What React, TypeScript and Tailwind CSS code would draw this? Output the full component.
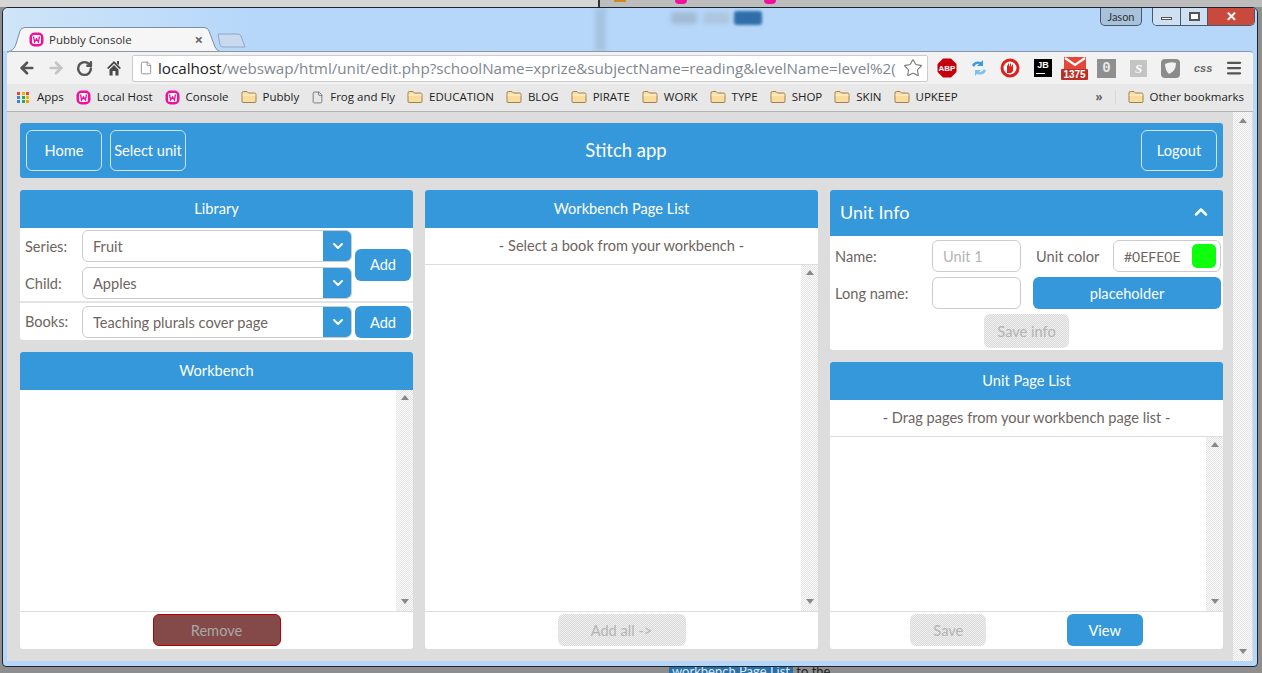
import { ArrowLeft, ArrowRight, ChevronDown, ChevronUp, File, Menu, RotateCw, Star } from "lucide-react"
import type { ReactNode } from "react"

const trackDither = "bg-[repeating-conic-gradient(#e4e4e4_0%_25%,#fbfbfb_0%_50%)] bg-size-[2px_2px]"
const buttonDither = "bg-[repeating-conic-gradient(#dadada_0%_25%,#efefef_0%_50%)] bg-size-[2px_2px]"

const bookmarks = [
  { kind: "wamp", label: "Local Host" },
  { kind: "wamp", label: "Console" },
  { kind: "folder", label: "Pubbly" },
  { kind: "doc", label: "Frog and Fly" },
  { kind: "folder", label: "EDUCATION" },
  { kind: "folder", label: "BLOG" },
  { kind: "folder", label: "PIRATE" },
  { kind: "folder", label: "WORK" },
  { kind: "folder", label: "TYPE" },
  { kind: "folder", label: "SHOP" },
  { kind: "folder", label: "SKIN" },
  { kind: "folder", label: "UPKEEP" },
]

function WampIcon() {
  return (
    <svg width="15" height="15" viewBox="0 0 15 15" className="shrink-0">
      <rect x="0.5" y="0.5" width="14" height="14" rx="5" fill="#f0109c" />
      <rect x="3" y="3" width="9" height="9" rx="2" fill="#fff" />
      <path d="M4.5 4.5 L5.6 10 L7.5 6.8 L9.4 10 L10.5 4.5" fill="none" stroke="#f0109c" strokeWidth="1.3" />
    </svg>
  )
}

function FolderIcon() {
  return (
    <svg width="16" height="14" viewBox="0 0 16 14" className="shrink-0">
      <path d="M1 3 Q1 1.5 2.5 1.5 H6 L7.5 3 H13.5 Q15 3 15 4.5 V11.5 Q15 12.5 14 12.5 H2 Q1 12.5 1 11.5 Z" fill="#fbdc9f" stroke="#9c8351" />
      <path d="M1.5 5 H14.5" stroke="#fff3d6" />
    </svg>
  )
}

function AppsIcon() {
  const colors = ["#e8453c", "#f4b400", "#e8453c", "#3f7fe8", "#2fa84f", "#f4b400", "#3f7fe8", "#2fa84f", "#f49a00"]
  return (
    <div className="grid grid-cols-3 gap-px w-[13px] shrink-0">
      {colors.map((c, i) => (
        <svg key={i} width="3" height="3" viewBox="0 0 3 3">
          <rect width="3" height="3" fill={c} />
        </svg>
      ))}
    </div>
  )
}

function HomeIcon() {
  return (
    <svg width="14" height="16" viewBox="0 0 14 16" className="ml-[14px] shrink-0">
      <path d="M7 1 L14 8 L12.5 9 L7 3.6 L1.5 9 L0 8 Z" fill="#444" />
      <path d="M10 1 H12 V5 L10 3.5 Z" fill="#444" />
      <path d="M2.5 9.5 L7 5 L11.5 9.5 V15.5 H8.4 V11 H5.6 V15.5 H2.5 Z" fill="#4a4a4a" />
    </svg>
  )
}

function Bookmark({ kind, label }: { kind: string; label: string }) {
  return (
    <div className="flex items-center gap-[6px] shrink-0">
      {kind === "wamp" && <WampIcon />}
      {kind === "folder" && <FolderIcon />}
      {kind === "doc" && <File className="h-[15px] w-[13px] text-[#666] shrink-0" strokeWidth={1.5} />}
      <span>{label}</span>
    </div>
  )
}

function Extensions() {
  return (
    <div className="flex items-center ml-[9px] h-full">
      <svg width="20" height="20" viewBox="0 0 20 20" className="shrink-0">
        <path d="M6 0.5 H14 L19.5 6 V14 L14 19.5 H6 L0.5 14 V6 Z" fill="#c4000d" />
        <text x="10" y="13" textAnchor="middle" fontSize="8" fontWeight="700" fill="#fff" fontFamily="Liberation Sans">ABP</text>
      </svg>
      <svg width="20" height="20" viewBox="0 0 20 20" className="ml-[12px] shrink-0">
        <path d="M3 7 Q6 2 12 4 L14 2 V8 H8 L10 6 Q7 5 5 9 Z" fill="#3a9ae0" />
        <path d="M17 13 Q14 18 8 16 L6 18 V12 H12 L10 14 Q13 15 15 11 Z" fill="#7cc2f0" />
      </svg>
      <svg width="20" height="20" viewBox="0 0 20 20" className="ml-[11px] shrink-0">
        <circle cx="10" cy="10" r="8" fill="#fff" stroke="#e0201a" strokeWidth="3" />
        <path d="M7 15 V8 L9 5 V9 L11 4.5 V9 L13 6 V13 L11 15 Z" fill="#e0201a" />
      </svg>
      <div className="ml-[14px] w-[18px] h-[18px] bg-black text-white text-[9px] leading-none font-bold font-['Liberation_Sans'] flex flex-col items-center pt-[2px] shrink-0">
        <span>JB</span>
        <span className="block w-[9px] h-px bg-white mt-[3px] self-start ml-[2px]" />
      </div>
      <div className="ml-[9px] relative w-[27px] h-[24px] shrink-0 flex flex-col items-center">
        <svg width="22" height="14" viewBox="0 0 22 14" className="mt-px">
          <rect width="22" height="14" fill="#e2473a" />
          <path d="M1 1 L11 8 L21 1" fill="none" stroke="#fff" strokeWidth="2.2" />
        </svg>
        <span className="absolute bottom-0 w-[27px] h-[11px] bg-[#bd2f24] text-white text-[10px] leading-[11px] font-bold text-center font-['Liberation_Sans'] rounded-[1px]">1375</span>
      </div>
      <div className="ml-[9px] w-[19px] h-[19px] bg-[#8f8f8f] text-[#e8e8e8] text-[14px] leading-[19px] font-bold text-center font-['Liberation_Mono'] shrink-0">0</div>
      <div className="ml-[14px] w-[17px] h-[17px] bg-[#c4c4c4] text-white text-[13px] leading-[17px] italic font-bold text-center font-['Liberation_Serif'] shrink-0">S</div>
      <svg width="19" height="19" viewBox="0 0 19 19" className="ml-[14px] shrink-0">
        <rect width="19" height="19" rx="4" fill="#8c8c8c" />
        <path d="M4 5 Q10 2 15 4 Q15 12 8 15 Q4 11 4 5 Z" fill="#f2f2f2" />
      </svg>
      <span className="ml-[14px] text-[11px] font-bold italic text-[#666] font-['Liberation_Sans'] w-[18px] shrink-0">css</span>
      <Menu className="ml-[13px] h-[18px] w-[18px] text-[#555] shrink-0" strokeWidth={3} />
    </div>
  )
}

function PanelHeader({ children }: { children: ReactNode }) {
  return (
    <div className="h-[38px] shrink-0 bg-[#3498db] text-white flex items-center justify-center rounded-t-[3px]">
      {children}
    </div>
  )
}

function Select({ value }: { value: string }) {
  return (
    <div className="w-[270px] h-[32px] flex rounded-[6px] border border-[#ccc] overflow-hidden bg-white">
      <span className="flex-1 pl-[10px] leading-[31px]">{value}</span>
      <span className="w-[29px] -my-px -mr-px bg-[#3498db] flex items-center justify-center">
        <ChevronDown className="h-[16px] w-[16px] text-white" strokeWidth={3} />
      </span>
    </div>
  )
}

function BlueButton({ className, children }: { className: string; children: ReactNode }) {
  return (
    <button className={`h-[32px] pt-px rounded-[6px] bg-[#3498db] text-white ${className}`}>{children}</button>
  )
}

function DisabledButton({ className, children }: { className: string; children: ReactNode }) {
  return (
    <button className={`pt-px rounded-[6px] text-[#b4b4b4] ${buttonDither} ${className}`}>{children}</button>
  )
}

function ScrollList() {
  return (
    <div className="flex-1 flex justify-end min-h-0">
      <div className={`w-[17px] flex flex-col items-center justify-between pt-[5px] pb-[7px] ${trackDither}`}>
        <span className="w-0 h-0 border-x-[4px] border-x-transparent border-b-[5px] border-b-[#888]" />
        <span className="w-0 h-0 border-x-[4px] border-x-transparent border-t-[5px] border-t-[#888]" />
      </div>
    </div>
  )
}

function Footer({ children }: { children: ReactNode }) {
  return (
    <div className="h-[38px] shrink-0 border-t border-[#ddd] flex items-start justify-center pt-[2px]">{children}</div>
  )
}

export default function App() {
  return (
    <div className="w-[1262px] h-[673px] overflow-hidden flex flex-col bg-[#8e8e8e] font-['Lato',sans-serif] text-[14.6px] text-[#6e6560]">
      {/* the window behind, top edge */}
      <div className="h-[7px] shrink-0 bg-[#d6d6d6] relative overflow-hidden">
        <div className="absolute left-[598px] top-0 bottom-0 right-0 bg-[#bdbdbd] border-l-2 border-[#333]" />
        <div className="absolute left-[675px] -top-[4px] w-[12px] h-[8px] rounded-full bg-[#f0109c]" />
        <div className="absolute left-[764px] -top-[4px] w-[12px] h-[8px] rounded-full bg-[#f0109c]" />
        <div className="absolute left-[614px] top-0 w-[12px] h-[2px] bg-[#d08a20]" />
      </div>

      {/* window */}
      <div className="h-[660px] shrink-0 mx-[2px] w-[1256px] border border-[#1c2530] rounded-t-[6px] rounded-b-[4px] bg-[#b6d7fa] flex flex-col px-[4px] pb-[5px] overflow-hidden">
        {/* title area */}
        <div className="h-[43px] shrink-0 relative bg-linear-to-r from-[#cfe5f8] to-[#b6d7fa] to-[20%] -mx-[4px] px-[4px]">
          <div className="absolute left-[592px] top-0 w-[11px] h-[43px] bg-[#a5c3e2] blur-[2px]" />
          <div className="absolute left-[668px] top-[4px] w-[26px] h-[12px] rounded-[3px] bg-[#a3bbd5] blur-[2px]" />
          <div className="absolute left-[700px] top-[4px] w-[27px] h-[12px] rounded-[3px] bg-[#aec6df] blur-[2px]" />
          <div className="absolute left-[731px] top-[3px] w-[28px] h-[14px] rounded-[3px] bg-[#2f6ea8] blur-[1.5px]" />
          <div className="absolute left-[1097px] top-0 w-[42px] h-[18px] rounded-b-[5px] border border-t-0 border-[#46586c] bg-[#a9c2db] text-[11px] leading-[17px] text-center text-[#333]">
            Jason
          </div>
          <div className="absolute left-[1149px] top-0 w-[103px] h-[18px] rounded-b-[5px] border border-t-0 border-[#46586c] flex overflow-hidden">
            <span className="w-[28px] border-r border-[#46586c] bg-[#cfe0f2] flex items-center justify-center">
              <span className="block w-[11px] h-[3px] mt-[4px] bg-white border border-[#555]" />
            </span>
            <span className="w-[27px] border-r border-[#46586c] bg-[#cfe0f2] flex items-center justify-center">
              <span className="block w-[11px] h-[9px] bg-white border-2 border-[#555]" />
            </span>
            <span className="flex-1 bg-[#c9493c] text-white text-[13px] leading-[17px] font-bold text-center">✕</span>
          </div>
          {/* tab */}
          <div className="absolute left-[4px] top-[19px] w-[214px] h-[25px]">
            <svg width="214" height="25" viewBox="0 0 214 25" className="absolute inset-0">
              <path d="M0 25 Q7 24 9 17 L13 4 Q14 0.5 18 0.5 H197 Q201 0.5 202 4 L208 20 Q210 24 214 25 Z" fill="#f6f6f6" stroke="#7d8ea3" />
            </svg>
            <div className="relative flex items-center h-full pl-[22px] pr-[18px] font-['Open_Sans',sans-serif] text-[11.5px] text-[#333]">
              <WampIcon />
              <span className="ml-[5px] flex-1">Pubbly Console</span>
              <span className="text-[15px] font-bold text-[#666] leading-none">×</span>
            </div>
          </div>
          <div className="absolute left-[213px] top-[25px] w-[30px] h-[15px]">
            <svg width="30" height="15" viewBox="0 0 30 15">
              <path d="M2 1 H22 Q24 1 25 3 L29 14 H7 Q5 14 4 12 Z" fill="#c9d9ee" stroke="#8fa6c4" />
            </svg>
          </div>
        </div>

        {/* toolbar */}
        <div className="h-[33px] shrink-0 bg-[#f2f2f2] border-t border-[#8a97a8] rounded-t-[3px] flex items-center pl-[11px] relative">
          <ArrowLeft className="h-[18px] w-[18px] text-[#555]" strokeWidth={3.5} />
          <ArrowRight className="h-[18px] w-[18px] text-[#c4c4c4] ml-[11px]" strokeWidth={3.5} />
          <RotateCw className="h-[17px] w-[17px] text-[#555] ml-[11px]" strokeWidth={3.5} />
          <HomeIcon />
          <div className="ml-[11px] w-[796px] h-[27px] bg-white border border-[#ccc] rounded-[2px] flex items-center pl-[6px] pr-[4px]">
            <File className="h-[16px] w-[14px] text-[#888] shrink-0" strokeWidth={1.5} />
            <div className="ml-[5px] flex-1 overflow-hidden whitespace-nowrap font-['Open_Sans',sans-serif] text-[15.2px] text-[#7f8790]">
              <span className="text-[#222]">localhost</span>/webswap/html/unit/edit.php?schoolName=xprize&amp;subjectName=reading&amp;levelName=level%2(
            </div>
            <Star className="h-[20px] w-[20px] text-[#777] shrink-0" strokeWidth={1.3} />
          </div>
          <Extensions />
        </div>

        {/* bookmarks */}
        <div className="h-[28px] shrink-0 bg-[#e8e8e8] border-b border-[#b4b4b4] flex items-center pb-[1px] pl-[10px] pr-[9px] gap-[12px] font-['Open_Sans',sans-serif] text-[11.5px] text-[#222] whitespace-nowrap">
          <div className="flex items-center gap-[7px] shrink-0">
            <AppsIcon />
            <span>Apps</span>
          </div>
          {bookmarks.map((b) => (
            <Bookmark key={b.label} kind={b.kind} label={b.label} />
          ))}
          <span className="ml-auto mr-[3px] font-bold text-[#666]">»</span>
          <span className="w-px h-[14px] bg-[#d8d8d8] -ml-[3px]" />
          <Bookmark kind="folder" label="Other bookmarks" />
        </div>

        {/* page */}
        <div className="flex-1 min-h-0 bg-[#dddddd] flex">
          <div className="w-[1226px] pl-[13px] pr-[10px] pt-[11px] flex flex-col gap-[12px]">
            <div className="h-[55px] shrink-0 bg-[#3498db] rounded-[3px] text-white flex items-center px-[6px]">
              <div className="flex-1 flex gap-[8px]">
                <button className="w-[76px] h-[41px] rounded-[6px] border border-[#cfe3f2]">Home</button>
                <button className="w-[76px] h-[41px] rounded-[6px] border border-[#cfe3f2] whitespace-nowrap">Select unit</button>
              </div>
              <span className="text-[18.5px] pl-[9px]">Stitch app</span>
              <div className="flex-1 flex justify-end">
                <button className="w-[76px] h-[41px] rounded-[6px] border border-[#cfe3f2]">Logout</button>
              </div>
            </div>

            <div className="flex gap-[12px] h-[459px]">
              {/* left column */}
              <div className="w-[393px] flex flex-col gap-[12px]">
                <div className="h-[150px] shrink-0 bg-white rounded-[3px] flex flex-col">
                  <PanelHeader>Library</PanelHeader>
                  <div className="flex items-center h-[73px] shrink-0">
                    <div className="flex flex-col gap-[5px]">
                      <div className="flex items-center pl-[5px]">
                        <span className="w-[57px] pt-px">Series:</span>
                        <Select value="Fruit" />
                      </div>
                      <div className="flex items-center pl-[5px]">
                        <span className="w-[57px] pt-px">Child:</span>
                        <Select value="Apples" />
                      </div>
                    </div>
                    <BlueButton className="w-[56px] ml-[3px]">Add</BlueButton>
                  </div>
                  <div className="h-[2px] bg-[#e4e4e4] shrink-0" />
                  <div className="flex items-center pl-[5px] pt-[3px]">
                    <span className="w-[57px]">Books:</span>
                    <Select value="Teaching plurals cover page" />
                    <BlueButton className="w-[56px] ml-[3px]">Add</BlueButton>
                  </div>
                </div>
                <div className="flex-1 min-h-0 bg-white rounded-[3px] flex flex-col">
                  <PanelHeader>Workbench</PanelHeader>
                  <ScrollList />
                  <Footer>
                    <button className="w-[128px] h-[32px] pt-px rounded-[6px] bg-[#844a4a] border border-[#b80000] text-[#a8a8a8]">Remove</button>
                  </Footer>
                </div>
              </div>

              {/* middle column */}
              <div className="w-[393px] bg-white rounded-[3px] flex flex-col">
                <PanelHeader>Workbench Page List</PanelHeader>
                <div className="h-[37px] shrink-0 border-b border-[#ddd] flex items-center justify-center">- Select a book from your workbench -</div>
                <ScrollList />
                <Footer>
                  <DisabledButton className="w-[128px] h-[32px]">Add all -&gt;</DisabledButton>
                </Footer>
              </div>

              {/* right column */}
              <div className="w-[393px] flex flex-col gap-[12px]">
                <div className="h-[160px] shrink-0 bg-white rounded-[3px] flex flex-col">
                  <div className="h-[46px] shrink-0 bg-[#3498db] rounded-t-[3px] text-white flex items-center justify-between pl-[10px] pr-[12px] pb-[2px]">
                    <span className="text-[18px]">Unit Info</span>
                    <ChevronUp className="h-[20px] w-[20px]" strokeWidth={3} />
                  </div>
                  <div className="flex items-center h-[32px] mt-[4px] pl-[5px]">
                    <span className="w-[97px] pt-px">Name:</span>
                    <span className="w-[89px] h-[32px] border border-[#ccc] rounded-[6px] pl-[10px] leading-[31px] text-[#b4b4b4]">Unit 1</span>
                    <span className="w-[77px] ml-[15px] pt-px">Unit color</span>
                    <span className="w-[108px] h-[32px] border border-[#ccc] rounded-[6px] flex items-center justify-between pl-[10px] pr-[4px] text-[14px]">
                      #0EFE0E
                      <span className="w-[24px] h-[24px] rounded-[5px] bg-[#0eff0e]" />
                    </span>
                  </div>
                  <div className="flex items-center h-[32px] mt-[5px] pl-[5px]">
                    <span className="w-[97px] pt-px">Long name:</span>
                    <span className="w-[89px] h-[32px] border border-[#ccc] rounded-[6px]" />
                    <BlueButton className="w-[188px] ml-[12px]">placeholder</BlueButton>
                  </div>
                  <div className="flex justify-center mt-[5px]">
                    <DisabledButton className="w-[85px] h-[34px]">Save info</DisabledButton>
                  </div>
                </div>
                <div className="flex-1 min-h-0 bg-white rounded-[3px] flex flex-col">
                  <PanelHeader>Unit Page List</PanelHeader>
                  <div className="h-[37px] shrink-0 border-b border-[#ddd] flex items-center justify-center">- Drag pages from your workbench page list -</div>
                  <ScrollList />
                  <div className="h-[38px] shrink-0 border-t border-[#ddd] flex items-start justify-evenly pt-[2px]">
                    <DisabledButton className="w-[76px] h-[32px]">Save</DisabledButton>
                    <BlueButton className="w-[76px]">View</BlueButton>
                  </div>
                </div>
              </div>
            </div>
          </div>

          {/* page scrollbar */}
          <div className={`w-[19px] flex flex-col items-center justify-between pt-[6px] pb-[7px] ${trackDither}`}>
            <span className="w-0 h-0 border-x-[4px] border-x-transparent border-b-[5px] border-b-[#888]" />
            <span className="w-0 h-0 border-x-[4px] border-x-transparent border-t-[5px] border-t-[#888]" />
          </div>
        </div>
      </div>

      {/* behind the window, bottom edge */}
      <div className="flex-1 bg-[#8e8e8e] pl-[669px] text-[13px] leading-[9px] text-[#222] overflow-hidden">
        <span className="bg-[#2a6fa8] text-[#d8e8f4] px-[3px]">workbench Page List</span> to the
      </div>
    </div>
  )
}
